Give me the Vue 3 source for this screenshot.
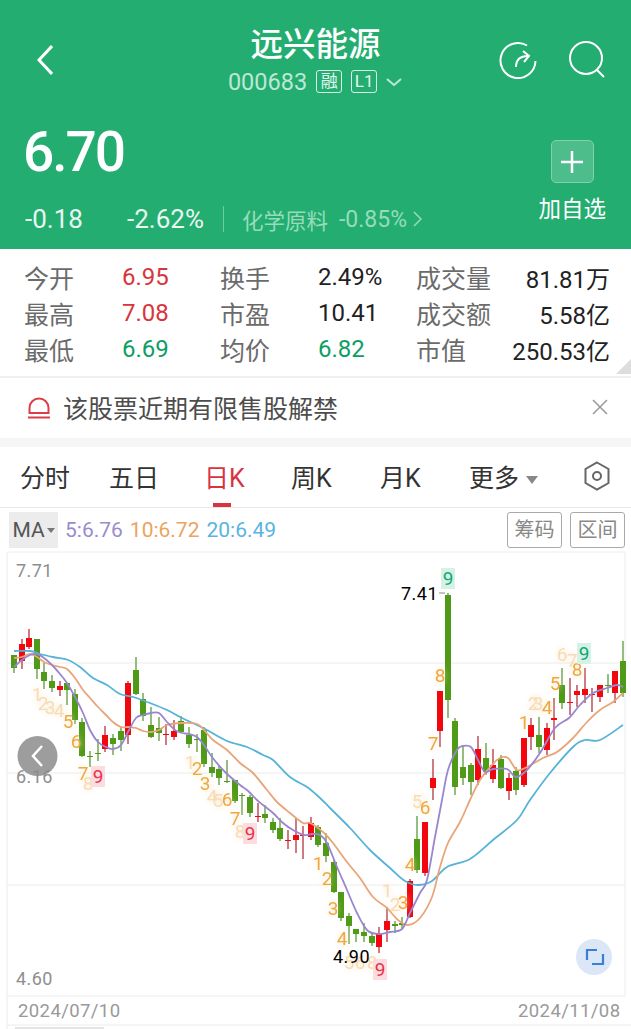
<template>
  <div class="page">
    <header class="head">
      <div class="nav">
        <svg class="back" width="16" height="30" viewBox="0 0 16 30"><path d="M15 1 2 15l13 14" /></svg>
        <div class="title-box">
          <div class="title">远兴能源</div>
          <div class="code-row">
            <span class="code">000683</span>
            <span class="tag">融</span>
            <span class="tag">L1</span>
            <svg width="16" height="8" viewBox="0 0 16 8"><path d="M1 1l7 6 7-6" /></svg>
          </div>
        </div>
        <div class="nav-icons">
          <svg class="redo" width="38" height="38" viewBox="0 0 38 38">
            <path d="M28 4.500A17.500 17.500 0 1 0 36.500 20" />
            <path d="M17 26c0-7 3-11 12-11M24 10l6 5-5 6" />
          </svg>
          <svg width="38" height="38" viewBox="0 0 38 38">
            <circle cx="18" cy="17" r="16" />
            <path d="M29 29l7 7" />
          </svg>
        </div>
      </div>
      <div class="quote">
        <div class="quote-main">
          <div class="price">6.70</div>
          <div class="change">
            <span class="chg">-0.18</span>
            <span class="pct">-2.62%</span>
            <i class="vline"></i>
            <span class="sector">化学原料</span>
            <span class="sector-pct">-0.85%</span>
            <svg width="9" height="16" viewBox="0 0 9 16"><path d="M1 1l7 7-7 7" /></svg>
          </div>
        </div>
        <div class="add">
          <div class="add-btn">
            <svg width="24" height="24" viewBox="0 0 24 24"><path d="M12 1v22M1 12h22" /></svg>
          </div>
          <div class="add-text">加自选</div>
        </div>
      </div>
    </header>

    <section class="stats">
      <template v-for="s in stats" :key="s.label">
        <span class="lab">{{ s.label }}</span>
        <span class="val" :class="[s.cls, { right: s.right }]">{{ s.value }}</span>
      </template>
      <i class="corner"></i>
    </section>

    <section class="notice">
      <svg width="24" height="24" viewBox="0 0 24 24">
        <path d="M2.500 18v-5a9.500 9.500 0 0 1 19 0v5z" />
        <path d="M1 22.500h22" />
      </svg>
      <span class="notice-text">该股票近期有限售股解禁</span>
      <svg class="close" width="16" height="16" viewBox="0 0 16 16"><path d="M1 1l14 14M15 1 1 15" /></svg>
    </section>

    <nav class="tabs">
      <span class="tab">分时</span>
      <span class="tab">五日</span>
      <span class="tab active">日K</span>
      <span class="tab">周K</span>
      <span class="tab">月K</span>
      <span class="tab more">更多<i class="caret"></i></span>
      <svg class="hex" width="26" height="30" viewBox="0 0 26 30">
        <path d="M13 1.500 24.500 8v14L13 28.500 1.500 22V8z" />
        <circle cx="13" cy="15" r="4" />
      </svg>
    </nav>

    <div class="ma-row">
      <div class="ma-btn">MA<i class="ma-caret"></i></div>
      <span class="ma5">5:6.76</span>
      <span class="ma10">10:6.72</span>
      <span class="ma20">20:6.49</span>
      <span class="spacer"></span>
      <span class="box-btn">筹码</span>
      <span class="box-btn">区间</span>
    </div>

    <svg class="chart" width="631" height="479" viewBox="0 550 631 479">
      <g class="grid">
        <path d="M7 552H625M7 552V1029M625 552V996M7 663H625M7 773H625M7 885H625M7 996H625M7 1025H631" />
      </g>
      <text class="axis" x="16" y="577">7.71</text>
      <text class="axis" x="16" y="783">6.16</text>
      <text class="axis" x="16" y="985">4.60</text>
      <text class="date" x="18" y="1017">2024/07/10</text>
      <text class="date" x="518" y="1017">2024/11/08</text>

      <g v-for="c in candles" :key="c.x">
        <line :x1="c.x" :x2="c.x" :y1="c.wt" :y2="c.wb" :class="c.up ? 'wick-r' : 'wick-g'" />
        <rect :x="c.x - 3" :y="c.bt" width="6" :height="c.bb - c.bt" :class="c.up ? 'body-r' : 'body-g'" />
      </g>

      <path class="line l20" :d="smooth(ma20)" />
      <path class="line l10" :d="smooth(ma10)" />
      <path class="line l5" :d="smooth(ma5)" />

      <g v-for="n in seq" :key="n.x + '-' + n.y">
        <rect v-if="n.red || n.green" :x="n.x - 7" :y="n.y - 10" width="14" height="21" :class="n.red ? 'bg-red' : 'bg-green'" />
        <text
          class="seq"
          :class="{ pale: n.pale, red: n.red, green: n.green }"
          :x="n.x"
          :y="n.y + 7"
        >{{ n.t }}</text>
      </g>

      <path class="tick" d="M439 593h6" />
      <text class="mark" x="401" y="600">7.41</text>
      <text class="mark" x="333" y="963">4.90</text>

      <circle class="round-back" cx="37.500" cy="756" r="20" />
      <path class="round-chev" d="M42 746 33 756l9 10" />
      <circle class="expand-bg" cx="594" cy="957" r="18" />
      <path class="expand" d="M587 960V950h10M603 954v10h-11" />
    </svg>
    <i class="scroll-bit"></i>
  </div>
</template>

<script setup>
const stats = [
  { label: '今开', value: '6.95', cls: 'up' },
  { label: '换手', value: '2.49%' },
  { label: '成交量', value: '81.81万', right: true },
  { label: '最高', value: '7.08', cls: 'up' },
  { label: '市盈', value: '10.41' },
  { label: '成交额', value: '5.58亿', right: true },
  { label: '最低', value: '6.69', cls: 'down' },
  { label: '均价', value: '6.82', cls: 'down' },
  { label: '市值', value: '250.53亿', right: true },
]

// body top, body bottom, wick top, wick bottom, 1 = red
const raw = [
  [655, 668, 655, 673, 0], [644, 661, 639, 669, 1], [638, 647, 629, 649, 1], [639, 669, 639, 679, 0],
  [672, 681, 663, 689, 0], [681, 688, 675, 692, 0], [686, 690, 681, 696, 1], [683, 690, 683, 705, 0],
  [694, 720, 689, 724, 0], [722, 756, 718, 757, 0], [756, 757, 751, 767, 0], [753, 754, 739, 761, 0],
  [735, 749, 726, 752, 1], [738, 744, 734, 755, 0], [731, 740, 727, 751, 0], [683, 735, 681, 744, 1],
  [670, 694, 657, 695, 0], [699, 716, 693, 721, 0], [725, 737, 707, 738, 0], [728, 733, 717, 741, 0],
  [734, 735, 724, 745, 1], [731, 737, 720, 740, 1], [721, 732, 716, 733, 0], [735, 744, 727, 748, 0],
  [739, 740, 734, 752, 0], [730, 764, 727, 767, 0], [767, 773, 753, 777, 0], [769, 778, 765, 785, 0],
  [781, 782, 760, 783, 0], [780, 801, 780, 803, 0], [795, 796, 793, 815, 0], [797, 813, 795, 817, 0],
  [816, 817, 803, 822, 1], [814, 818, 805, 823, 0], [822, 830, 818, 833, 0], [828, 839, 818, 841, 0],
  [840, 841, 830, 849, 1], [835, 840, 818, 853, 1], [835, 836, 826, 859, 1], [823, 837, 817, 840, 1],
  [827, 845, 825, 847, 0], [843, 856, 833, 862, 0], [862, 892, 859, 893, 0], [892, 918, 892, 921, 0],
  [916, 926, 913, 944, 0], [929, 934, 929, 942, 0], [932, 936, 923, 942, 0], [936, 943, 933, 946, 0],
  [934, 947, 927, 953, 1], [921, 930, 907, 942, 1], [924, 926, 921, 933, 0], [923, 925, 917, 929, 0],
  [881, 917, 879, 918, 1], [839, 870, 816, 873, 0], [822, 873, 822, 876, 1], [778, 788, 759, 800, 1],
  [691, 731, 691, 747, 1], [595, 700, 593, 718, 0], [721, 787, 718, 795, 0], [767, 778, 746, 785, 0],
  [765, 782, 763, 795, 0], [749, 780, 736, 785, 1], [758, 772, 743, 775, 0], [765, 779, 749, 783, 1],
  [759, 788, 755, 789, 0], [778, 791, 773, 800, 1], [771, 790, 767, 795, 0], [738, 785, 738, 787, 1],
  [725, 737, 718, 750, 1], [735, 747, 717, 753, 0], [728, 750, 723, 755, 1], [718, 720, 698, 740, 1],
  [685, 703, 668, 709, 0], [702, 703, 678, 715, 1], [691, 695, 685, 707, 1], [689, 695, 668, 703, 1],
  [694, 695, 688, 712, 1], [685, 697, 685, 702, 1], [685, 686, 674, 693, 0], [671, 693, 671, 703, 1],
  [661, 693, 641, 697, 0],
]
const candles = raw.map((r, i) => ({
  x: Math.round(14 + i * 7.61),
  bt: r[0],
  bb: r[1],
  wt: r[2],
  wb: r[3],
  up: r[4] === 1,
}))

const ma5 = '14,667 22,660 30,655 37,654 44,658 52,665 60,674 67,683 75,697 83,713 90,730 98,742 106,747 113,749 121,745 129,730 136,718 143,715 151,713 159,713 167,722 175,730 182,733 189,734 197,737 204,745 212,757 225,772 240,785 247,790 257,800 263,805 273,813 283,823 293,830 304,835 312,834 320,835 327,843 337,867 347,890 357,913 367,930 378,934 390,932 402,929 410,913 420,893 427,880 435,837 442,800 448,770 457,750 463,746 471,747 478,760 485,772 493,769 507,769 516,777 527,770 540,753 555,728 569,718 580,705 593,693 607,688 617,685 623,687'
const ma10 = '14,658 22,657 30,654 37,657 44,662 52,665 60,667 67,669 75,678 83,690 90,698 98,707 106,715 113,722 121,727 129,727 136,728 143,731 151,732 159,730 167,725 182,723 197,724 204,730 213,740 227,750 240,763 253,773 267,790 277,802 290,813 303,823 310,823 323,832 333,843 347,862 360,878 373,897 387,908 398,920 408,925 420,918 432,897 440,867 448,843 460,822 470,800 480,780 492,765 500,758 508,758 517,770 527,767 543,758 557,752 573,738 587,722 600,710 613,702 623,693'
const ma20 = '14,651 30,651 40,654 53,657 68,660 80,667 93,678 107,685 120,694 133,697 150,703 167,710 182,718 197,725 207,730 227,741 247,747 263,755 273,760 290,777 307,787 320,798 330,808 350,828 370,850 390,868 405,881 418,885 432,881 447,867 470,859 493,840 517,820 530,800 550,773 573,747 585,740 600,740 623,725'

// catmull-rom through the points, so the averages don't look jagged
const smooth = (str) => {
  const p = str.split(' ').map((s) => s.split(',').map(Number))
  let d = `M${p[0][0]} ${p[0][1]}`
  for (let i = 0; i < p.length - 1; i++) {
    const a = p[i - 1] || p[i]
    const b = p[i]
    const c = p[i + 1]
    const e = p[i + 2] || c
    const c1x = (b[0] + (c[0] - a[0]) / 6).toFixed(1)
    const c1y = (b[1] + (c[1] - a[1]) / 6).toFixed(1)
    const c2x = (c[0] - (e[0] - b[0]) / 6).toFixed(1)
    const c2y = (c[1] - (e[1] - b[1]) / 6).toFixed(1)
    d += `C${c1x} ${c1y} ${c2x} ${c2y} ${c[0]} ${c[1]}`
  }
  return d
}

const seq = [
  { t: 1, x: 37, y: 694, pale: true }, { t: 2, x: 43, y: 703, pale: true }, { t: 3, x: 50, y: 707, pale: true },
  { t: 4, x: 59, y: 710, pale: true }, { t: 5, x: 68, y: 721 }, { t: 6, x: 76, y: 741 },
  { t: 7, x: 83, y: 773 }, { t: 8, x: 88, y: 783, pale: true }, { t: 9, x: 98, y: 776, red: true },
  { t: 1, x: 190, y: 762, pale: true }, { t: 2, x: 197, y: 768 }, { t: 3, x: 205, y: 783 },
  { t: 4, x: 212, y: 796, pale: true }, { t: 5, x: 218, y: 800, pale: true }, { t: 6, x: 227, y: 799 },
  { t: 7, x: 235, y: 818 }, { t: 8, x: 240, y: 831, pale: true }, { t: 9, x: 250, y: 833, red: true },
  { t: 1, x: 318, y: 863 }, { t: 2, x: 327, y: 878 }, { t: 3, x: 333, y: 908 }, { t: 4, x: 342, y: 938 },
  { t: 5, x: 349, y: 962, pale: true }, { t: 6, x: 360, y: 962, pale: true }, { t: 8, x: 372, y: 962, pale: true },
  { t: 9, x: 380, y: 969, red: true },
  { t: 1, x: 387, y: 890, pale: true }, { t: 2, x: 395, y: 904, pale: true }, { t: 3, x: 403, y: 902 },
  { t: 4, x: 410, y: 864 }, { t: 5, x: 417, y: 801, pale: true }, { t: 6, x: 425, y: 807 },
  { t: 7, x: 433, y: 743 }, { t: 8, x: 440, y: 675 }, { t: 9, x: 448, y: 578, green: true },
  { t: 1, x: 524, y: 722 }, { t: 2, x: 533, y: 703, pale: true }, { t: 3, x: 538, y: 703, pale: true },
  { t: 4, x: 547, y: 707 }, { t: 5, x: 555, y: 683 }, { t: 6, x: 562, y: 654, pale: true },
  { t: 7, x: 572, y: 660, pale: true }, { t: 8, x: 577, y: 669 }, { t: 9, x: 584, y: 653, green: true },
]
</script>

<style>
body {
  background: #fff;
}
</style>

<style scoped>
.page {
  position: relative;
  width: 631px;
  height: 1029px;
  overflow: hidden;
  background: #fff;
  color: #333;
  font-family: Roboto, "Noto Sans CJK SC", sans-serif;
}

.head {
  height: 249px;
  box-sizing: border-box;
  background: #23ad71;
  color: #fff;
  padding: 24px 25px 0 25px;
}

.head svg {
  fill: none;
  stroke: currentColor;
  stroke-width: 2;
}

.nav {
  display: flex;
  align-items: center;
  height: 70px;
}

.back {
  margin-left: 12px;
  margin-top: 2px;
  stroke-width: 3 !important;
}

.title-box {
  position: absolute;
  left: 0;
  top: 25px;
  width: 631px;
  text-align: center;
}

.title {
  font-size: 32.500px;
  line-height: 40px;
  font-weight: 500;
}

.code-row {
  display: flex;
  justify-content: center;
  align-items: center;
  gap: 9px;
  height: 33px;
  margin-left: -1px;
  color: #bde8d3;
}

.code {
  font-size: 23.500px;
}

.tag {
  box-sizing: border-box;
  width: 26px;
  height: 23px;
  border: 1px solid #d8f2e5;
  border-radius: 3px;
  font-size: 17px;
  line-height: 21px;
  color: #e6f7ef;
  text-align: center;
}

.nav-icons {
  display: flex;
  gap: 32px;
  margin-left: auto;
  margin-top: 2px;
}

.redo {
  margin-left: 1px;
  margin-right: -1px;
}

.quote {
  display: flex;
  justify-content: space-between;
}

.quote-main {
  margin-left: -2px;
}

.price {
  margin-top: 26px;
  font-size: 55px;
  line-height: 64px;
  font-weight: 500;
  letter-spacing: -2px;
}

.change {
  display: flex;
  align-items: center;
  height: 32px;
  margin-top: 19px;
  margin-left: 2px;
  color: #e8f7f0;
  font-size: 26px;
}

.chg {
  width: 102px;
}

.vline {
  width: 1px;
  height: 26px;
  margin: 0 18px 0 19px;
  background: #6fcaa2;
}

.sector {
  font-size: 21.500px;
  color: #96dcbb;
}

.sector-pct {
  margin: 0 6px 0 11px;
  font-size: 23px;
  color: #96dcbb;
}

.change svg {
  color: #96dcbb;
  stroke-width: 1.500;
}

.add {
  margin-top: 46px;
  text-align: center;
}

.add-btn {
  display: flex;
  align-items: center;
  justify-content: center;
  width: 43px;
  height: 43px;
  margin: 0 auto;
  box-sizing: border-box;
  border: 1px solid #7fd0ab;
  border-radius: 5px;
  background: #4dbd8c;
}

.add-btn svg {
  stroke-width: 2.500;
}

.add-text {
  margin-top: 11px;
  font-size: 22.500px;
  line-height: 30px;
}

.stats {
  position: relative;
  display: grid;
  grid-template-columns: 98px 98px 98px 98px 90px 104px;
  grid-auto-rows: 36px;
  align-items: center;
  height: 129px;
  box-sizing: border-box;
  padding: 10px 0 0 24px;
  border-bottom: 2px solid #efefef;
}

.lab {
  font-size: 25px;
  color: #6b6b6b;
}

.val {
  font-size: 24px;
  color: #222;
}

.val.right {
  text-align: right;
}

.val.up {
  color: #d9343b;
}

.val.down {
  color: #0f9d63;
}

.corner {
  position: absolute;
  right: 0;
  bottom: 2px;
  width: 0;
  height: 0;
  border-left: 15px solid transparent;
  border-bottom: 15px solid #ddd;
}

.notice {
  display: flex;
  align-items: center;
  height: 58px;
  padding: 0 23px 2px 27px;
  border-bottom: 9px solid #f6f6f6;
}

.notice svg {
  fill: none;
  stroke: #dc3c48;
  stroke-width: 2;
}

.notice-text {
  margin-left: 12px;
  font-size: 25px;
  color: #4d4d4d;
}

.notice .close {
  margin-left: auto;
  stroke: #999;
  stroke-width: 1.500;
}

.tabs {
  position: relative;
  display: grid;
  grid-template-columns: 89px 95px 87px 89px 89px 115px 26px;
  align-items: center;
  height: 61px;
  box-sizing: border-box;
  padding: 0 0 2px 20px;
  border-bottom: 1px solid #e8e8e8;
}

.tab {
  font-size: 25px;
  color: #333;
}

.tab.active {
  position: relative;
  color: #d8343f;
}

.tab.active::after {
  content: '';
  position: absolute;
  left: 9px;
  bottom: -13px;
  width: 18px;
  height: 4px;
  background: #d8343f;
}

.caret {
  display: inline-block;
  margin-left: 7px;
  vertical-align: 3px;
  border-left: 6.500px solid transparent;
  border-right: 6.500px solid transparent;
  border-top: 8px solid #888;
}

.hex {
  fill: none;
  stroke: #666;
  stroke-width: 2;
}

.ma-row {
  display: flex;
  align-items: center;
  height: 42px;
  padding: 2px 6px 0 9px;
  box-sizing: border-box;
  font-size: 21px;
}

.ma-btn {
  display: flex;
  align-items: center;
  justify-content: center;
  width: 49px;
  height: 36px;
  margin-right: 7px;
  background: #ececec;
  color: #555;
}

.ma-caret {
  margin-left: 2px;
  border-left: 4px solid transparent;
  border-right: 4px solid transparent;
  border-top: 5px solid #777;
}

.ma5 {
  color: #9a8ccf;
  margin-right: 7px;
}

.ma10 {
  color: #eba45e;
  margin-right: 7px;
}

.ma20 {
  color: #58b4e0;
}

.spacer {
  flex: 1;
}

.box-btn {
  box-sizing: border-box;
  width: 55px;
  height: 36px;
  margin-left: 8px;
  border: 1px solid #aaa;
  border-radius: 3px;
  font-size: 20px;
  line-height: 34px;
  text-align: center;
  color: #888;
}

.chart {
  display: block;
}

.grid path {
  fill: none;
  stroke: #ececec;
  stroke-width: 1;
}

.axis,
.date {
  fill: #8e8e8e;
  font-size: 18px;
  letter-spacing: 0.4px;
}

.date {
  font-size: 18.500px;
  fill: #999;
}

.wick-r {
  stroke: #b5333f;
  stroke-width: 1.300;
}

.wick-g {
  stroke: #5f9a38;
  stroke-width: 1.300;
}

.body-r {
  fill: #f3070f;
}

.body-g {
  fill: #4f9a16;
}

.line {
  fill: none;
  stroke-width: 1.800;
  stroke-linejoin: round;
}

.l5 {
  stroke: #9a86cf;
}

.l10 {
  stroke: #e8a678;
}

.l20 {
  stroke: #55b3d8;
}

.seq {
  fill: #efa83f;
  font-size: 19px;
  text-anchor: middle;
  filter: drop-shadow(0 0 3px #fbe6c4);
}

.seq.pale {
  fill: #f6dcb6;
}

.seq.red {
  fill: #e8334a;
  filter: none;
}

.seq.green {
  fill: #12a772;
  filter: none;
}

.bg-red {
  fill: #fbdde0;
}

.bg-green {
  fill: #d6f2e7;
}

.mark {
  fill: #000;
  font-size: 18px;
  letter-spacing: 0.5px;
}

.tick {
  stroke: #888;
  stroke-width: 1;
}

.round-back {
  fill: rgba(140, 140, 140, 0.85);
}

.round-chev {
  fill: none;
  stroke: #fff;
  stroke-width: 2.500;
}

.expand-bg {
  fill: #dbe6f7;
}

.expand {
  fill: none;
  stroke: #3a7ed6;
  stroke-width: 2.200;
}

.scroll-bit {
  position: absolute;
  left: 15px;
  bottom: 0;
  width: 89px;
  height: 2px;
  background: #e4e4e4;
}
</style>
